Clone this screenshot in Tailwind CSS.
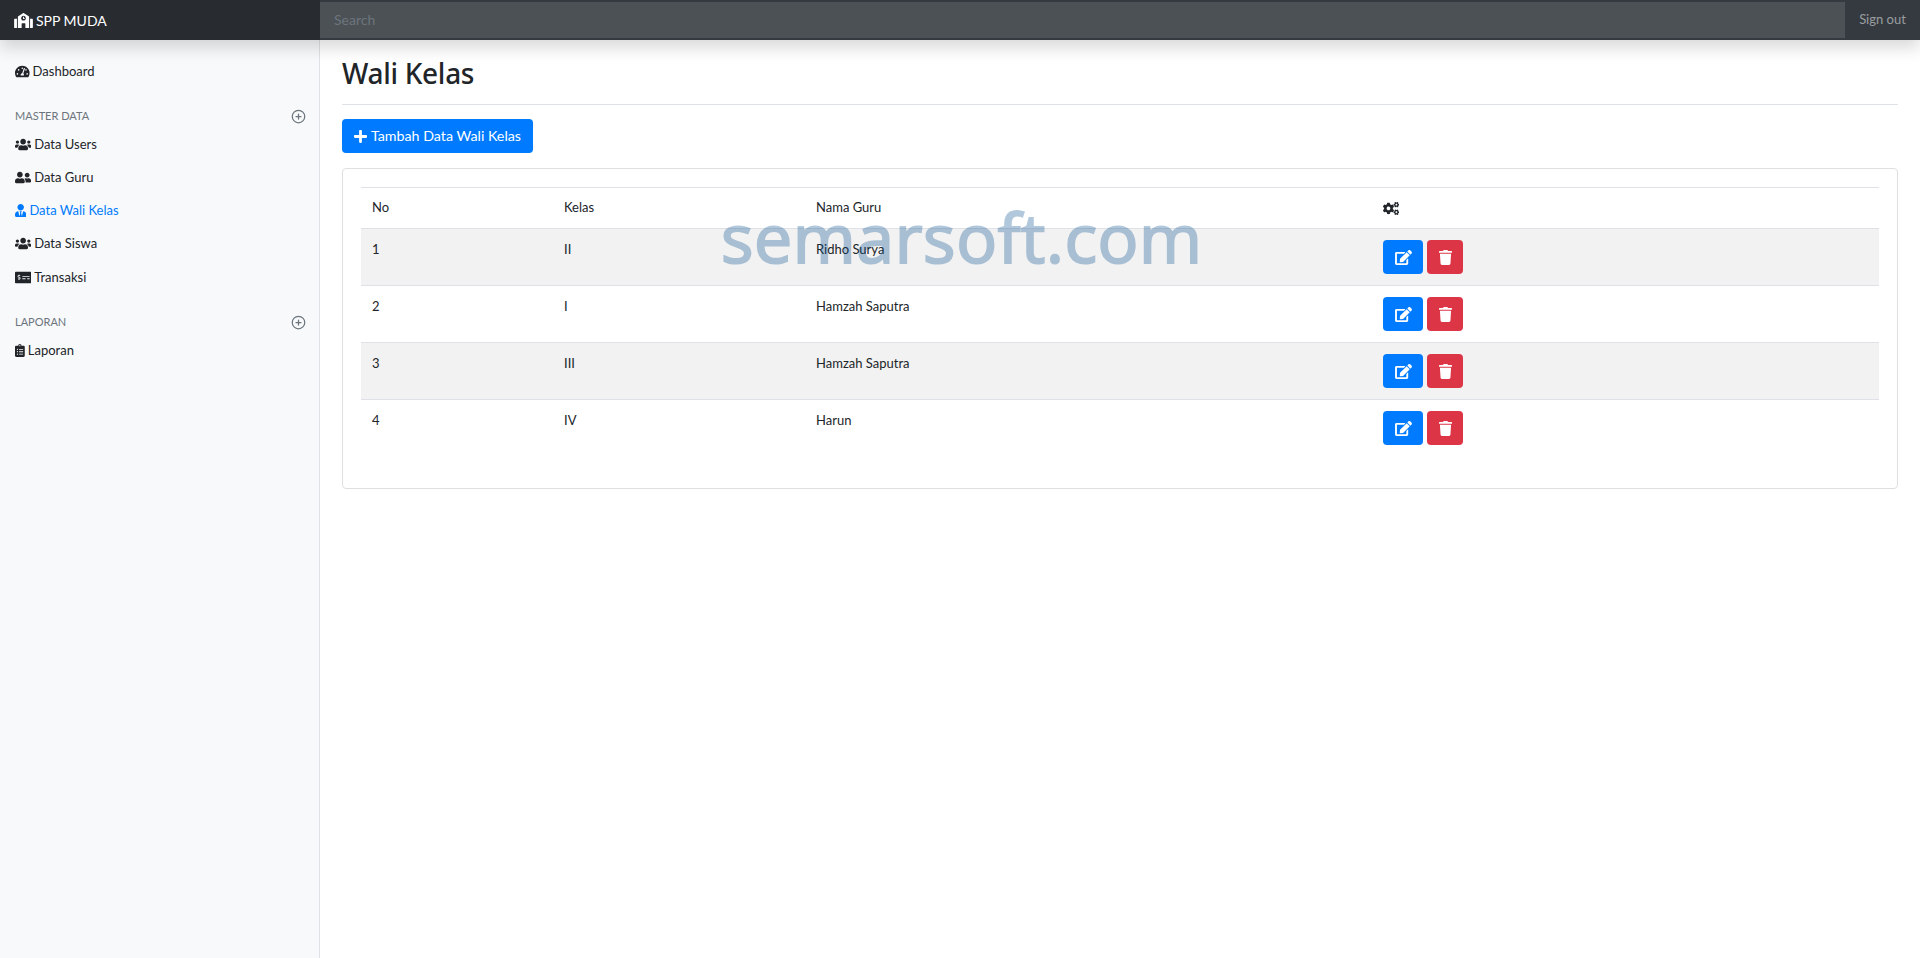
<!DOCTYPE html>
<html lang="en">
<head>
    <meta charset="UTF-8">
    <title>SPP MUDA</title>
    <script src="https://cdn.jsdelivr.net/npm/@tailwindcss/browser@4"></script>
</head>
<body class="bg-white text-[#212529] font-['Lato',sans-serif] text-[13px] overflow-hidden">
    <svg class="hidden">
        <symbol id="i-users" viewBox="0 0 640 512"><path d="M96 224c35.3 0 64-28.7 64-64s-28.7-64-64-64-64 28.7-64 64 28.7 64 64 64zm448 0c35.3 0 64-28.7 64-64s-28.7-64-64-64-64 28.7-64 64 28.7 64 64 64zm32 32h-64c-17.6 0-33.5 7.1-45.1 18.6 40.3 22.1 68.9 62 75.1 109.4h66c17.7 0 32-14.3 32-32v-32c0-35.3-28.7-64-64-64zm-256 0c61.9 0 112-50.1 112-112S381.9 32 320 32 208 82.1 208 144s50.1 112 112 112zm76.8 32h-8.3c-20.8 10-43.9 16-68.5 16s-47.6-6-68.5-16h-8.3C179.6 288 128 339.6 128 403.2V432c0 26.5 21.5 48 48 48h288c26.5 0 48-21.5 48-48v-28.8c0-63.6-51.6-115.2-115.2-115.2zm-223.7-13.4C161.5 263.1 145.6 256 128 256H64c-35.3 0-64 28.7-64 64v32c0 17.7 14.3 32 32 32h65.9c6.3-47.4 34.9-87.3 75.2-109.4z"/></symbol>
        <symbol id="i-edit" viewBox="0 0 576 512"><path d="M402.6 83.2l90.2 90.2c3.8 3.8 3.8 10 0 13.8L274.4 405.6l-92.8 10.3c-12.4 1.4-22.9-9.1-21.5-21.5l10.3-92.8L388.8 83.2c3.8-3.8 10-3.8 13.8 0zm162-22.9l-48.8-48.8c-15.2-15.2-39.9-15.2-55.2 0l-35.4 35.4c-3.8 3.8-3.8 10 0 13.8l90.2 90.2c3.8 3.8 10 3.8 13.8 0l35.4-35.4c15.2-15.3 15.2-40 0-55.2zM384 346.2V448H64V128h229.8c3.2 0 6.2-1.3 8.5-3.5l40-40c7.6-7.6 2.2-20.5-8.5-20.5H48C21.5 64 0 85.5 0 112v352c0 26.5 21.5 48 48 48h352c26.5 0 48-21.5 48-48V306.2c0-10.7-12.9-16-20.5-8.5l-40 40c-2.2 2.3-3.5 5.3-3.5 8.5z"/></symbol>
        <symbol id="i-trash" viewBox="0 0 448 512"><path d="M432 32H312l-9.4-18.7A24 24 0 0 0 281.1 0H166.8a23.72 23.72 0 0 0-21.4 13.3L136 32H16A16 16 0 0 0 0 48v32a16 16 0 0 0 16 16h416a16 16 0 0 0 16-16V48a16 16 0 0 0-16-16zM53.2 467a48 48 0 0 0 47.9 45h245.8a48 48 0 0 0 47.9-45L416 128H32z"/></symbol>
        <symbol id="i-circle-plus" viewBox="0 0 24 24"><circle cx="12" cy="12" r="10" fill="none" stroke="currentColor" stroke-width="2"/><path d="M12 8v8M8 12h8" fill="none" stroke="currentColor" stroke-width="2" stroke-linecap="round"/></symbol>
    </svg>

    <!-- Navbar -->
    <header class="relative z-10 flex h-10 bg-[#343a40] shadow-[0_8px_16px_rgba(0,0,0,0.15)]">
        <a href="#" class="flex w-80 shrink-0 items-center bg-[#282c31] pl-[14px] text-[14px] text-white">
            <svg class="mr-[3px] h-[15px] w-[19px] fill-white" viewBox="0 0 640 512"><path d="M0 224v272c0 8.84 7.16 16 16 16h80V192H32c-17.67 0-32 14.33-32 32zm360-48h-24v-40c0-4.42-3.58-8-8-8h-16c-4.42 0-8 3.58-8 8v64c0 4.42 3.58 8 8 8h48c4.42 0 8-3.58 8-8v-16c0-4.42-3.58-8-8-8zm137.75-63.96l-160-106.67a32.02 32.02 0 0 0-35.5 0l-160 106.67A32.002 32.002 0 0 0 128 138.66V512h128V368c0-8.84 7.16-16 16-16h96c8.84 0 16 7.16 16 16v144h128V138.67c0-10.7-5.35-20.69-14.25-26.63zM320 256c-44.18 0-80-35.82-80-80s35.82-80 80-80 80 35.82 80 80-35.82 80-80 80zm288-64h-64v320h80c8.84 0 16-7.16 16-16V224c0-17.67-14.33-32-32-32z"/></svg>
            SPP MUDA
        </a>
        <div class="my-[2px] flex flex-1 items-center bg-[#4b5155] pl-[14px] text-[#6c757d] text-sm">Search</div>
        <a href="#" class="flex w-[75px] shrink-0 items-center justify-center text-[13px] text-white/50">Sign out</a>
    </header>

    <div class="flex h-[918px]">
        <!-- Sidebar -->
        <aside class="w-80 shrink-0 border-r border-[#dee2e6] bg-[#f8f9fa] pt-[15px]">
            <a href="#" class="flex h-[33px] items-center pl-[15px]">
                <svg class="mr-[3px] h-[13px] w-[14.6px] fill-current" viewBox="0 0 576 512"><path d="M288 32C128.94 32 0 160.94 0 320c0 52.8 14.25 102.26 39.06 144.8 5.61 9.62 16.3 15.2 27.44 15.2h443c11.14 0 21.83-5.58 27.44-15.2C561.75 422.26 576 372.8 576 320c0-159.06-128.94-288-288-288zm0 64c14.71 0 26.58 10.13 30.32 23.65-1.11 2.26-2.64 4.23-3.45 6.67l-9.22 27.67c-5.13 3.49-10.97 6.01-17.64 6.01-17.67 0-32-14.33-32-32S270.33 96 288 96zM96 384c-17.67 0-32-14.33-32-32s14.33-32 32-32 32 14.33 32 32-14.33 32-32 32zm48-160c-17.67 0-32-14.33-32-32s14.33-32 32-32 32 14.33 32 32-14.33 32-32 32zm246.77-72.41l-61.33 184C343.13 347.33 352 364.54 352 384c0 11.72-3.38 22.55-8.88 32H232.88c-5.5-9.45-8.88-20.28-8.88-32 0-33.94 26.5-61.43 59.9-63.59l61.34-184.01c4.17-12.56 17.73-19.45 30.36-15.17 12.57 4.19 19.35 17.79 15.17 30.36zm14.66 57.2l15.52-46.55c3.47-1.29 7.13-2.23 11.05-2.23 17.67 0 32 14.33 32 32s-14.33 32-32 32c-11.38-.01-20.89-6.28-26.57-15.22zM480 384c-17.67 0-32-14.33-32-32s14.33-32 32-32 32 14.33 32 32-14.33 32-32 32z"/></svg>
                Dashboard
            </a>

            <div class="mt-[18px] mb-[2px] flex h-5 items-center justify-between pl-[15px] pr-[13px] text-[11px] text-[#6c757d]">
                <span>MASTER DATA</span>
                <svg class="h-[15px] w-[15px]"><use href="#i-circle-plus"/></svg>
            </div>
            <a href="#" class="flex h-[33px] items-center pl-[15px]">
                <svg class="mr-[3px] h-[13px] w-[16.25px] fill-current"><use href="#i-users"/></svg>
                Data Users
            </a>
            <a href="#" class="flex h-[33px] items-center pl-[15px]">
                <svg class="mr-[3px] h-[13px] w-[16.25px] fill-current" viewBox="0 0 640 512"><path d="M192 256c61.9 0 112-50.1 112-112S253.9 32 192 32 80 82.1 80 144s50.1 112 112 112zm76.8 32h-8.3c-20.8 10-43.9 16-68.5 16s-47.6-6-68.5-16h-8.3C51.6 288 0 339.6 0 403.2V432c0 26.5 21.5 48 48 48h288c26.5 0 48-21.5 48-48v-28.8c0-63.6-51.6-115.2-115.2-115.2zM480 256c53 0 96-43 96-96s-43-96-96-96-96 43-96 96 43 96 96 96zm48 32h-3.8c-13.9 4.8-28.6 8-44.2 8s-30.3-3.2-44.2-8H432c-20.4 0-39.2 5.9-55.7 15.4 24.4 26.3 39.7 61.2 39.7 99.8v38.4c0 2.2-.5 4.3-.6 6.4H592c26.5 0 48-21.5 48-48 0-61.9-50.1-112-112-112z"/></svg>
                Data Guru
            </a>
            <a href="#" class="flex h-[33px] items-center pl-[15px] text-[#007bff]">
                <svg class="mr-[3px] h-[13px] w-[11.4px] fill-current" viewBox="0 0 448 512"><path d="M224 256c70.7 0 128-57.3 128-128S294.7 0 224 0 96 57.3 96 128s57.3 128 128 128zm95.8 32.6L272 480l-32-136 32-56h-96l32 56-32 136-47.8-191.4C56.9 292 0 350.3 0 422.4V464c0 26.5 21.5 48 48 48h352c26.5 0 48-21.5 48-48v-41.6c0-72.1-56.9-130.4-128.2-133.8z"/></svg>
                Data Wali Kelas
            </a>
            <a href="#" class="flex h-[33px] items-center pl-[15px]">
                <svg class="mr-[3px] h-[13px] w-[16.25px] fill-current"><use href="#i-users"/></svg>
                Data Siswa
            </a>
            <a href="#" class="mt-[1px] flex h-[33px] items-center pl-[15px]">
                <svg class="mr-[3px] h-[13px] w-[16.25px] fill-current" viewBox="0 0 640 512"><path d="M608 32H32C14.33 32 0 46.33 0 64v384c0 17.67 14.33 32 32 32h576c17.67 0 32-14.33 32-32V64c0-17.67-14.33-32-32-32zM176 327.88V344c0 4.42-3.58 8-8 8h-16c-4.42 0-8-3.58-8-8v-16.29c-11.29-.58-22.27-4.52-31.37-11.35-3.9-2.93-4.1-8.77-.57-12.14l11.75-11.21c2.77-2.64 6.89-2.76 10.13-.73 3.87 2.42 8.26 3.72 12.82 3.72h28.11c6.5 0 11.8-5.92 11.8-13.19 0-5.95-3.61-11.19-8.77-12.73l-45-13.5c-18.59-5.58-31.58-23.42-31.58-43.39 0-24.52 19.05-44.44 42.67-45.07V152c0-4.42 3.58-8 8-8h16c4.42 0 8 3.58 8 8v16.29c11.29.58 22.27 4.51 31.37 11.35 3.9 2.93 4.1 8.77.57 12.14l-11.75 11.21c-2.77 2.64-6.89 2.76-10.13.73-3.87-2.43-8.26-3.72-12.82-3.72h-28.11c-6.5 0-11.8 5.92-11.8 13.19 0 5.95 3.61 11.19 8.77 12.73l45 13.5c18.59 5.58 31.58 23.42 31.58 43.39 0 24.53-19.05 44.44-42.67 45.07zM416 312c0 4.42-3.58 8-8 8H296c-4.42 0-8-3.58-8-8v-16c0-4.42 3.58-8 8-8h112c4.42 0 8 3.58 8 8v16zm160 0c0 4.42-3.58 8-8 8h-80c-4.42 0-8-3.58-8-8v-16c0-4.42 3.58-8 8-8h80c4.42 0 8 3.58 8 8v16zm0-96c0 4.42-3.58 8-8 8H296c-4.42 0-8-3.58-8-8v-16c0-4.42 3.58-8 8-8h272c4.42 0 8 3.58 8 8v16z"/></svg>
                Transaksi
            </a>

            <div class="mt-[18px] mb-[2px] flex h-5 items-center justify-between pl-[15px] pr-[13px] text-[11px] text-[#6c757d]">
                <span>LAPORAN</span>
                <svg class="h-[15px] w-[15px]"><use href="#i-circle-plus"/></svg>
            </div>
            <a href="#" class="flex h-[33px] items-center pl-[15px]">
                <svg class="mr-[3px] h-[13px] w-[9.75px] fill-current" viewBox="0 0 384 512"><path d="M336 64h-80c0-35.3-28.7-64-64-64s-64 28.7-64 64H48C21.5 64 0 85.5 0 112v352c0 26.5 21.5 48 48 48h288c26.5 0 48-21.5 48-48V112c0-26.5-21.5-48-48-48zM96 424c-13.3 0-24-10.7-24-24s10.7-24 24-24 24 10.7 24 24-10.7 24-24 24zm0-96c-13.3 0-24-10.7-24-24s10.7-24 24-24 24 10.7 24 24-10.7 24-24 24zm0-96c-13.3 0-24-10.7-24-24s10.7-24 24-24 24 10.7 24 24-10.7 24-24 24zm96-192c13.3 0 24 10.7 24 24s-10.7 24-24 24-24-10.7-24-24 10.7-24 24-24zm128 368c0 4.4-3.6 8-8 8H168c-4.4 0-8-3.6-8-8v-16c0-4.4 3.6-8 8-8h144c4.4 0 8 3.6 8 8v16zm0-96c0 4.4-3.6 8-8 8H168c-4.4 0-8-3.6-8-8v-16c0-4.4 3.6-8 8-8h144c4.4 0 8 3.6 8 8v16zm0-96c0 4.4-3.6 8-8 8H168c-4.4 0-8-3.6-8-8v-16c0-4.4 3.6-8 8-8h144c4.4 0 8 3.6 8 8v16z"/></svg>
                Laporan
            </a>
        </aside>

        <!-- Main Content -->
        <main class="relative flex-1 px-[22px]">
            <div class="flex h-[65px] items-center border-b border-[#dee2e6] pt-[2px]">
                <h1 class="font-['Noto_Sans',sans-serif] text-[28px] font-medium leading-none tracking-[-0.3px]">Wali Kelas</h1>
            </div>

            <button class="mt-[14px] flex h-[34px] w-[191px] items-center justify-center gap-[4px] rounded bg-[#007bff] text-[14.25px] text-white">
                <svg class="h-[15px] w-[13px] fill-white" viewBox="0 0 448 512"><path d="M416 208H272V64c0-17.67-14.33-32-32-32h-32c-17.67 0-32 14.33-32 32v144H32c-17.67 0-32 14.33-32 32v32c0 17.67 14.33 32 32 32h144v144c0 17.67 14.33 32 32 32h32c17.67 0 32-14.33 32-32V304h144c17.67 0 32-14.33 32-32v-32c0-17.67-14.33-32-32-32z"/></svg>
                Tambah Data Wali Kelas
            </button>

            <div class="mt-[15px] h-[321px] rounded border border-[#dfdfdf] px-[18px] pt-[18px]">
                <table class="w-full table-fixed border-collapse">
                    <colgroup>
                        <col class="w-[191px]">
                        <col class="w-[252px]">
                        <col class="w-[567px]">
                        <col>
                    </colgroup>
                    <thead>
                        <tr class="h-[41px] border-y border-[#dee2e6] text-left">
                            <th class="px-[11px] font-normal">No</th>
                            <th class="px-[12px] font-normal">Kelas</th>
                            <th class="px-[12px] font-normal">Nama Guru</th>
                            <th class="px-[12px] font-normal">
                                <svg class="h-[13px] w-[16.25px] fill-current" viewBox="0 0 640 512"><path d="M512.1 191l-8.2 14.3c-3 5.3-9.4 7.5-15.1 5.4-11.8-4.4-22.6-10.7-32.1-18.6-4.6-3.8-5.8-10.5-2.8-15.7l8.2-14.3c-6.9-8-12.3-17.3-15.9-27.4h-16.5c-6 0-11.2-4.3-12.2-10.3-2-12-2.1-24.6 0-37.1 1-6 6.2-10.4 12.2-10.4h16.5c3.6-10.1 9-19.4 15.9-27.4l-8.2-14.3c-3-5.2-1.9-11.9 2.8-15.7 9.5-7.9 20.4-14.2 32.1-18.6 5.7-2.1 12.1.1 15.1 5.4l8.2 14.3c10.5-1.9 21.2-1.9 31.7 0L552 6.3c3-5.3 9.4-7.5 15.1-5.4 11.8 4.4 22.6 10.7 32.1 18.6 4.6 3.8 5.8 10.5 2.8 15.7l-8.2 14.3c6.9 8 12.3 17.3 15.9 27.4h16.5c6 0 11.2 4.3 12.2 10.3 2 12 2.1 24.6 0 37.1-1 6-6.2 10.4-12.2 10.4h-16.5c-3.6 10.1-9 19.4-15.9 27.4l8.2 14.3c3 5.2 1.9 11.9-2.8 15.7-9.5 7.9-20.4 14.2-32.1 18.6-5.7 2.1-12.1-.1-15.1-5.4l-8.2-14.3c-10.4 1.9-21.2 1.9-31.7 0zm-10.5-58.8c38.5 29.6 82.4-14.3 52.8-52.8-38.5-29.7-82.4 14.3-52.8 52.8zM386.3 286.1l33.7 16.8c10.1 5.8 14.5 18.1 10.5 29.1-8.9 24.2-26.4 46.4-42.6 65.8-7.4 8.9-20.2 11.1-30.3 5.3l-29.1-16.8c-16 13.7-34.6 24.6-54.9 31.7v33.6c0 11.6-8.3 21.6-19.7 23.6-24.6 4.2-50.4 4.4-75.9 0-11.5-2-20-11.9-20-23.6V418c-20.3-7.2-38.9-18-54.9-31.7L74 403c-10 5.8-22.9 3.6-30.3-5.3-16.2-19.4-33.3-41.6-42.2-65.7-4-10.9.4-23.2 10.5-29.1l33.3-16.8c-3.9-20.9-3.9-42.4 0-63.4L12 205.8c-10.1-5.8-14.6-18.1-10.5-29 8.9-24.2 26-46.4 42.2-65.8 7.4-8.9 20.2-11.1 30.3-5.3l29.1 16.8c16-13.7 34.6-24.6 54.9-31.7V57.1c0-11.5 8.2-21.5 19.6-23.5 24.6-4.2 50.5-4.4 76-.1 11.5 2 20 11.9 20 23.6v33.6c20.3 7.2 38.9 18 54.9 31.7l29.1-16.8c10-5.8 22.9-3.6 30.3 5.3 16.2 19.4 33.2 41.6 42.1 65.8 4 10.9.1 23.2-10 29.1l-33.7 16.8c3.9 21 3.9 42.5 0 63.5zm-117.6 21.1c59.2-77-28.7-164.9-105.7-105.7-59.2 77 28.7 164.9 105.7 105.7zm243.4 182.7l-8.2 14.3c-3 5.3-9.4 7.5-15.1 5.4-11.8-4.4-22.6-10.7-32.1-18.6-4.6-3.8-5.8-10.5-2.8-15.7l8.2-14.3c-6.9-8-12.3-17.3-15.9-27.4h-16.5c-6 0-11.2-4.3-12.2-10.3-2-12-2.1-24.6 0-37.1 1-6 6.2-10.4 12.2-10.4h16.5c3.6-10.1 9-19.4 15.9-27.4l-8.2-14.3c-3-5.2-1.9-11.9 2.8-15.7 9.5-7.9 20.4-14.2 32.1-18.6 5.7-2.1 12.1.1 15.1 5.4l8.2 14.3c10.5-1.9 21.2-1.9 31.7 0l8.2-14.3c3-5.3 9.4-7.5 15.1-5.4 11.8 4.4 22.6 10.7 32.1 18.6 4.6 3.8 5.8 10.5 2.8 15.7l-8.2 14.3c6.9 8 12.3 17.3 15.9 27.4h16.5c6 0 11.2 4.3 12.2 10.3 2 12 2.1 24.6 0 37.1-1 6-6.2 10.4-12.2 10.4h-16.5c-3.6 10.1-9 19.4-15.9 27.4l8.2 14.3c3 5.2 1.9 11.9-2.8 15.7-9.5 7.9-20.4 14.2-32.1 18.6-5.7 2.1-12.1-.1-15.1-5.4l-8.2-14.3c-10.4 1.9-21.2 1.9-31.7 0zM501.6 431c38.5 29.6 82.4-14.3 52.8-52.8-38.5-29.6-82.4 14.3-52.8 52.8z"/></svg>
                            </th>
                        </tr>
                    </thead>
                    <tbody>
                        <tr class="h-[57px] border-b border-[#dee2e6] bg-[#f2f2f2] align-top">
                            <td class="px-[11px] pt-[11px]">1</td>
                            <td class="px-[12px] pt-[11px]">II</td>
                            <td class="px-[12px] pt-[11px]">Ridho Surya</td>
                            <td class="px-[12px] pt-[11px]">
                                <div class="flex gap-[4px]">
                                    <a href="#" class="flex h-[34px] w-10 items-center justify-center rounded bg-[#007bff]"><svg class="h-[15px] w-[17px] fill-white"><use href="#i-edit"/></svg></a>
                                    <a href="#" class="flex h-[34px] w-9 items-center justify-center rounded bg-[#dc3545]"><svg class="h-[15px] w-[13px] fill-white"><use href="#i-trash"/></svg></a>
                                </div>
                            </td>
                        </tr>
                        <tr class="h-[57px] border-b border-[#dee2e6] align-top">
                            <td class="px-[11px] pt-[11px]">2</td>
                            <td class="px-[12px] pt-[11px]">I</td>
                            <td class="px-[12px] pt-[11px]">Hamzah Saputra</td>
                            <td class="px-[12px] pt-[11px]">
                                <div class="flex gap-[4px]">
                                    <a href="#" class="flex h-[34px] w-10 items-center justify-center rounded bg-[#007bff]"><svg class="h-[15px] w-[17px] fill-white"><use href="#i-edit"/></svg></a>
                                    <a href="#" class="flex h-[34px] w-9 items-center justify-center rounded bg-[#dc3545]"><svg class="h-[15px] w-[13px] fill-white"><use href="#i-trash"/></svg></a>
                                </div>
                            </td>
                        </tr>
                        <tr class="h-[57px] border-b border-[#dee2e6] bg-[#f2f2f2] align-top">
                            <td class="px-[11px] pt-[11px]">3</td>
                            <td class="px-[12px] pt-[11px]">III</td>
                            <td class="px-[12px] pt-[11px]">Hamzah Saputra</td>
                            <td class="px-[12px] pt-[11px]">
                                <div class="flex gap-[4px]">
                                    <a href="#" class="flex h-[34px] w-10 items-center justify-center rounded bg-[#007bff]"><svg class="h-[15px] w-[17px] fill-white"><use href="#i-edit"/></svg></a>
                                    <a href="#" class="flex h-[34px] w-9 items-center justify-center rounded bg-[#dc3545]"><svg class="h-[15px] w-[13px] fill-white"><use href="#i-trash"/></svg></a>
                                </div>
                            </td>
                        </tr>
                        <tr class="h-[57px] align-top">
                            <td class="px-[11px] pt-[11px]">4</td>
                            <td class="px-[12px] pt-[11px]">IV</td>
                            <td class="px-[12px] pt-[11px]">Harun</td>
                            <td class="px-[12px] pt-[11px]">
                                <div class="flex gap-[4px]">
                                    <a href="#" class="flex h-[34px] w-10 items-center justify-center rounded bg-[#007bff]"><svg class="h-[15px] w-[17px] fill-white"><use href="#i-edit"/></svg></a>
                                    <a href="#" class="flex h-[34px] w-9 items-center justify-center rounded bg-[#dc3545]"><svg class="h-[15px] w-[13px] fill-white"><use href="#i-trash"/></svg></a>
                                </div>
                            </td>
                        </tr>
                    </tbody>
                </table>
            </div>

            <!-- Watermark -->
            <div class="pointer-events-none absolute left-[401px] top-[163px] font-['Open_Sans',sans-serif] text-[68px] leading-none tracking-[0.6px] text-[#004a8c] opacity-30 [-webkit-text-stroke:2px_#004a8c]">semarsoft.com</div>
        </main>
    </div>
</body>
</html>
